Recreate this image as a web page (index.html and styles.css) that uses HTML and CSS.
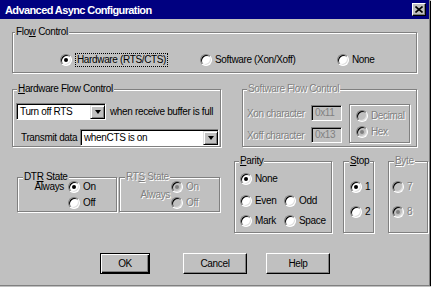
FILE: index.html
```html
<!DOCTYPE html>
<html lang="en">

<head>
    <meta charset="UTF-8">
    <title>Advanced Async Configuration</title>
    <link rel="stylesheet" href="styles.css">
</head>

<body>
    <div class="window">
        <div class="titlebar">
            <span class="title">Advanced Async Configuration</span>
            <span class="close">
                <svg width="8" height="7" viewBox="0 0 8 7">
                    <path d="M0.5 0.5L7.5 6.5M7.5 0.5L0.5 6.5" stroke="#000" stroke-width="1.6" fill="none"/>
                </svg>
            </span>
        </div>

        <div class="content">
            <!-- Flow control -->
            <div class="group flow">
                <span class="group-label">Flo<u>w</u> Control</span>
                <label class="opt opt-hw"><span class="radio checked"></span><span class="focus">Hardware (RTS/CTS)</span></label>
                <label class="opt opt-sw"><span class="radio"></span><span>Software (Xon/Xoff)</span></label>
                <label class="opt"><span class="radio"></span><span>None</span></label>
            </div>

            <div class="row mid">
                <div class="group hw">
                    <span class="group-label"><u>H</u>ardware Flow Control</span>
                    <div class="hw-line">
                        <div class="combo combo-rts">
                            <span class="combo-text">Turn off RTS</span>
                            <span class="combo-btn"><span class="arrow"></span></span>
                        </div>
                        <span class="hint">when receive buffer is full</span>
                    </div>
                    <div class="hw-line second">
                        <span class="tx-label">Transmit data</span>
                        <div class="combo combo-cts">
                            <span class="combo-text">whenCTS is on</span>
                            <span class="combo-btn"><span class="arrow"></span></span>
                        </div>
                    </div>
                </div>

                <div class="group sw">
                    <span class="group-label disabled">Software Flow Control</span>
                    <div class="chars">
                        <div class="char-line">
                            <span class="char-label disabled">Xon character</span>
                            <span class="edit">0x11</span>
                        </div>
                        <div class="char-line">
                            <span class="char-label disabled">Xoff character</span>
                            <span class="edit">0x13</span>
                        </div>
                    </div>
                    <div class="radix">
                        <label class="opt"><span class="radio off"></span><span class="disabled">Decimal</span></label>
                        <label class="opt"><span class="radio off checked"></span><span class="disabled">Hex</span></label>
                    </div>
                </div>
            </div>

            <div class="row lower">
                <div class="group state dtr">
                    <span class="group-label">DT<u>R</u> State</span>
                    <span class="always">Always</span>
                    <div class="stack">
                        <label class="opt"><span class="radio checked"></span><span>On</span></label>
                        <label class="opt"><span class="radio"></span><span>Off</span></label>
                    </div>
                </div>
                <div class="group state rts">
                    <span class="group-label disabled">RT<u>S</u> State</span>
                    <span class="always disabled">Always</span>
                    <div class="stack">
                        <label class="opt"><span class="radio off checked"></span><span class="disabled">On</span></label>
                        <label class="opt"><span class="radio off"></span><span class="disabled">Off</span></label>
                    </div>
                </div>

                <div class="group parity">
                    <span class="group-label"><u>P</u>arity</span>
                    <div class="par-line">
                        <label class="opt"><span class="radio checked"></span><span>None</span></label>
                    </div>
                    <div class="par-line">
                        <label class="opt par-opt"><span class="radio"></span><span>Even</span></label>
                        <label class="opt"><span class="radio"></span><span>Odd</span></label>
                    </div>
                    <div class="par-line">
                        <label class="opt par-opt"><span class="radio"></span><span>Mark</span></label>
                        <label class="opt"><span class="radio"></span><span>Space</span></label>
                    </div>
                </div>

                <div class="group bits stop">
                    <span class="group-label"><u>S</u>top</span>
                    <label class="opt"><span class="radio checked"></span><span>1</span></label>
                    <label class="opt"><span class="radio"></span><span>2</span></label>
                </div>

                <div class="group bits byte">
                    <span class="group-label disabled"><u>B</u>yte</span>
                    <label class="opt"><span class="radio off"></span><span class="disabled">7</span></label>
                    <label class="opt"><span class="radio off checked"></span><span class="disabled">8</span></label>
                </div>
            </div>

            <div class="buttons">
                <button class="btn default">OK</button>
                <button class="btn cancel">Cancel</button>
                <button class="btn">Help</button>
            </div>
        </div>
    </div>
</body>

</html>
```

FILE: styles.css
```css
body {
    margin: 0;
    padding: 0;
    background-color: #c0c0c0;
    font-family: "Liberation Sans", Arial, sans-serif;
    font-size: 10px;
    letter-spacing: -0.35px;
    color: #000;
}

.window {
    width: 430px;
    height: 286px;
    box-sizing: border-box;
    background-color: #c0c0c0;
    border-right: 1px solid #808080;
    border-bottom: 1px solid #808080;
    box-shadow: 1px 1px 0 #000;
    overflow: hidden;
}

.titlebar {
    height: 19px;
    background-color: #000080;
    display: flex;
    justify-content: space-between;
    align-items: center;
    padding: 0 3px 0 5px;
}

.title {
    color: #fff;
    font-weight: bold;
    font-size: 11px;
    letter-spacing: -0.6px;
}

.close {
    width: 14px;
    height: 13px;
    box-sizing: border-box;
    background-color: #c0c0c0;
    border: 1px solid;
    border-color: #fff #000 #000 #fff;
    box-shadow: inset -1px -1px 0 #808080;
    display: flex;
    justify-content: center;
    align-items: center;
}

.content {
    padding-left: 12px;
}

u {
    text-decoration: underline;
}

.disabled {
    color: #808080;
    text-shadow: 1px 1px 0 #fff;
}

/* group boxes */
.group {
    position: relative;
    box-sizing: border-box;
    border: 1px solid #808080;
    box-shadow: inset 1px 1px 0 #fff, 1px 1px 0 #fff;
}

.group-label {
    position: absolute;
    top: -6px;
    left: 4px;
    padding: 0 1px;
    line-height: 10px;
    background-color: #c0c0c0;
    white-space: nowrap;
}

.flow .group-label {
    left: 2px;
}

.state .group-label,
.bits .group-label {
    left: 5px;
}

/* radios */
.opt {
    display: flex;
    align-items: center;
    gap: 3px;
    line-height: 12px;
    white-space: nowrap;
}

.radio {
    width: 12px;
    height: 12px;
    box-sizing: border-box;
    border-radius: 50%;
    background-color: #fff;
    border: 1px solid;
    border-color: #808080 #fff #fff #808080;
    box-shadow: inset 1px 1px 0 #000, inset -1px -1px 0 #dfdfdf;
    position: relative;
    flex-shrink: 0;
}

.radio.checked::after {
    content: "";
    position: absolute;
    left: 3px;
    top: 3px;
    width: 4px;
    height: 4px;
    border-radius: 50%;
    background-color: #000;
}

.radio.off {
    background-color: #c0c0c0;
}

.radio.off.checked::after {
    background-color: #808080;
}

/* flow control */
.flow {
    margin-top: 13px;
    width: 405px;
    height: 41px;
    display: flex;
    padding: 14px 0 0 47px;
}

.opt-hw {
    width: 140px;
}

.opt-sw {
    width: 137px;
}

.focus {
    outline: 1px dotted #000;
    padding: 0 1px;
    margin-left: 1px;
}

.row {
    display: flex;
    align-items: flex-start;
}

/* hardware flow control */
.mid {
    margin-top: 16px;
    gap: 21px;
}

.hw {
    width: 209px;
    height: 58px;
    padding: 13px 0 0 3px;
}

.hw-line {
    display: flex;
    align-items: center;
}

.hw-line.second {
    margin-top: 9px;
}

.hint {
    margin-left: 4px;
    white-space: nowrap;
}

.tx-label {
    width: 59px;
    margin-left: 5px;
    white-space: nowrap;
    overflow: hidden;
}

.combo {
    height: 17px;
    box-sizing: border-box;
    background-color: #fff;
    border: 1px solid;
    border-color: #808080 #fff #fff #808080;
    box-shadow: inset 1px 1px 0 #000;
    display: flex;
    align-items: stretch;
    padding: 1px 0 0 1px;
}

.combo-rts {
    width: 90px;
}

.combo-cts {
    width: 139px;
}

.combo-text {
    flex: 1;
    padding-left: 2px;
    line-height: 14px;
    white-space: nowrap;
    overflow: hidden;
}

.combo-btn {
    width: 15px;
    box-sizing: border-box;
    background-color: #c0c0c0;
    border: 1px solid;
    border-color: #dfdfdf #000 #000 #dfdfdf;
    box-shadow: inset 1px 1px 0 #fff, inset -1px -1px 0 #808080;
    display: flex;
    justify-content: center;
    align-items: center;
}

.arrow {
    width: 0;
    height: 0;
    border-left: 3.5px solid transparent;
    border-right: 3.5px solid transparent;
    border-top: 4px solid #000;
}

/* software flow control */
.sw {
    width: 175px;
    height: 58px;
    display: flex;
    align-items: flex-start;
    padding: 14px 0 0 4px;
}

.chars {
    padding-top: 1px;
    display: flex;
    flex-direction: column;
    gap: 6px;
}

.char-line {
    display: flex;
    align-items: center;
    height: 16px;
}

.char-label {
    width: 64px;
    white-space: nowrap;
    overflow: hidden;
}

.edit {
    width: 31px;
    height: 16px;
    box-sizing: border-box;
    border: 1px solid;
    border-color: #808080 #fff #fff #808080;
    box-shadow: inset 1px 1px 0 #000;
    padding-left: 3px;
    line-height: 14px;
    color: #808080;
}

.radix {
    margin-left: 7px;
    width: 61px;
    height: 39px;
    box-sizing: border-box;
    border: 1px solid #808080;
    box-shadow: inset 1px 1px 0 #fff, 1px 1px 0 #fff;
    padding: 5px 0 0 6px;
    display: flex;
    flex-direction: column;
    gap: 4px;
}

/* lower row */
.lower {
    margin-top: 14px;
}

.state {
    margin-top: 16px;
    height: 35px;
    display: flex;
    align-items: flex-start;
}

.dtr {
    width: 100px;
    margin-left: 5px;
}

.rts {
    width: 101px;
    margin-left: 2px;
}

.always {
    width: 50px;
    box-sizing: border-box;
    text-align: right;
    padding-right: 4px;
    padding-top: 4px;
    line-height: 10px;
}

.rts .always {
    width: 51px;
    padding-right: 1px;
    padding-top: 12px;
}

.stack {
    padding-top: 3px;
    display: flex;
    flex-direction: column;
    gap: 4px;
}

.parity {
    margin-left: 14px;
    width: 98px;
    height: 72px;
    padding: 11px 0 0 5px;
}

.par-line {
    display: flex;
    margin-bottom: 10px;
}

.par-line + .par-line {
    margin-bottom: 8px;
}

.par-opt {
    width: 44px;
}

.bits {
    height: 72px;
    padding-top: 19px;
    display: flex;
    flex-direction: column;
    gap: 13px;
}

.stop {
    margin-left: 11px;
    width: 31px;
    padding-left: 6px;
}

.byte {
    margin-left: 14px;
    width: 40px;
    padding-left: 3px;
}

/* buttons */
.buttons {
    margin-top: 20px;
    margin-left: 88px;
    display: flex;
}

.btn {
    height: 21px;
    width: 64px;
    box-sizing: border-box;
    background-color: #c0c0c0;
    border: 1px solid;
    border-color: #fff #000 #000 #fff;
    box-shadow: inset -1px -1px 0 #808080;
    font-family: inherit;
    font-size: 10px;
    letter-spacing: -0.35px;
    color: #000;
    padding: 0;
}

.btn.default {
    width: 50px;
    border-color: #000;
    box-shadow: inset 1px 1px 0 #fff, inset -1px -1px 0 #000, inset -2px -2px 0 #808080;
}

.btn.cancel {
    margin-left: 33px;
    margin-right: 19px;
}
```
